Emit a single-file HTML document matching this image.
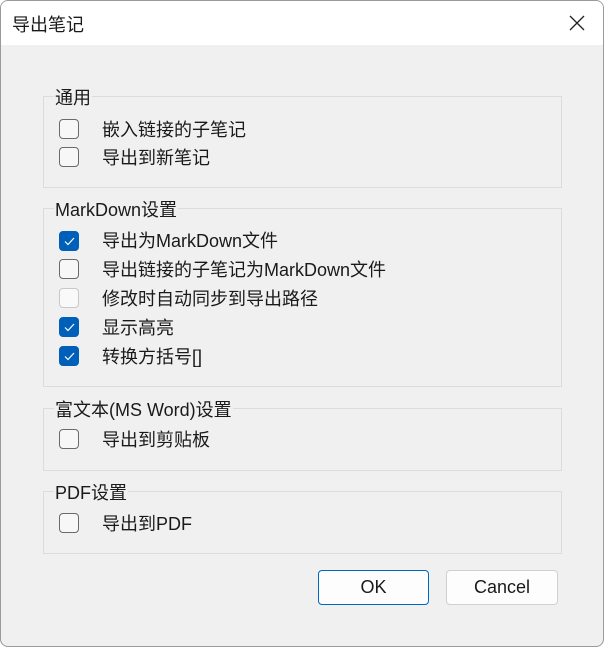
<!DOCTYPE html><html><head><meta charset="utf-8"><style>
*{margin:0;padding:0;box-sizing:border-box}
body{width:604px;height:647px;background:#fff;font-family:"Liberation Sans","Noto Sans CJK SC",sans-serif;font-size:18px;color:#1a1a1a;position:relative;overflow:hidden}
.win{position:absolute;left:0;top:0;width:604px;height:647px;box-shadow:inset 0 0 0 1px #9a9a9a;border-radius:8px;background:#f0f0f0;overflow:hidden}
.title{position:absolute;left:1px;top:1px;width:602px;height:44px;background:#fff;border-radius:7px 7px 0 0}
.t{position:absolute;left:11px;top:10px;font-size:18px}
.x{position:absolute;left:567px;top:13px}
.g{position:absolute;left:43px;width:519px;border:1px solid #dcdcdc}
.lbl{position:absolute;left:10px;top:-10px;background:#f0f0f0;padding:0 1px;line-height:22px}
.cb{position:absolute;left:59px;width:20px;height:20px;border:1px solid #6a6a6a;border-radius:4px;background:#f7f7f7}
.cb.c{background:#005fb8;border-color:#005fb8}
.cb.d{border-color:#c8c8c8;background:#f9f9f9}
.cb svg{position:absolute;left:4px;top:5px}
.tx{position:absolute;left:102px;line-height:22px}
.btn{position:absolute;top:570px;height:35px;border:1px solid #d0d0d0;border-radius:4px;background:#fdfdfd;text-align:center;line-height:33px;font-size:18px}
</style></head><body><div class="win">
<div class="title"><div class="t">导出笔记</div>
<svg class="x" width="18" height="18" viewBox="0 0 18 18"><path d="M2 2L16 16M16 2L2 16" stroke="#222" stroke-width="1.3"/></svg></div>
<div class="g" style="top:96px;height:92px"><div class="lbl">通用</div></div>
<div class="g" style="top:208px;height:179px"><div class="lbl">MarkDown设置</div></div>
<div class="g" style="top:408px;height:63px"><div class="lbl">富文本(MS Word)设置</div></div>
<div class="g" style="top:491px;height:63px"><div class="lbl">PDF设置</div></div>

<div class="cb" style="top:119px"></div><div class="tx" style="top:119px">嵌入链接的子笔记</div>
<div class="cb" style="top:147px"></div><div class="tx" style="top:147px">导出到新笔记</div>

<div class="cb c" style="top:231px"><svg width="11" height="9" viewBox="0 0 11 9"><path d="M1 4.5L4 7.5L10 1" stroke="#fff" fill="none" stroke-width="1.2"/></svg></div><div class="tx" style="top:230px">导出为MarkDown文件</div>
<div class="cb" style="top:259px"></div><div class="tx" style="top:259px">导出链接的子笔记为MarkDown文件</div>
<div class="cb d" style="top:288px"></div><div class="tx" style="top:288px">修改时自动同步到导出路径</div>
<div class="cb c" style="top:317px"><svg width="11" height="9" viewBox="0 0 11 9"><path d="M1 4.5L4 7.5L10 1" stroke="#fff" fill="none" stroke-width="1.2"/></svg></div><div class="tx" style="top:317px">显示高亮</div>
<div class="cb c" style="top:346px"><svg width="11" height="9" viewBox="0 0 11 9"><path d="M1 4.5L4 7.5L10 1" stroke="#fff" fill="none" stroke-width="1.2"/></svg></div><div class="tx" style="top:346px">转换方括号[]</div>

<div class="cb" style="top:429px"></div><div class="tx" style="top:429px">导出到剪贴板</div>
<div class="cb" style="top:513px"></div><div class="tx" style="top:513px">导出到PDF</div>

<div class="btn" style="left:318px;width:111px;border-color:#0067c0">OK</div>
<div class="btn" style="left:446px;width:112px">Cancel</div>
</div></body></html>
